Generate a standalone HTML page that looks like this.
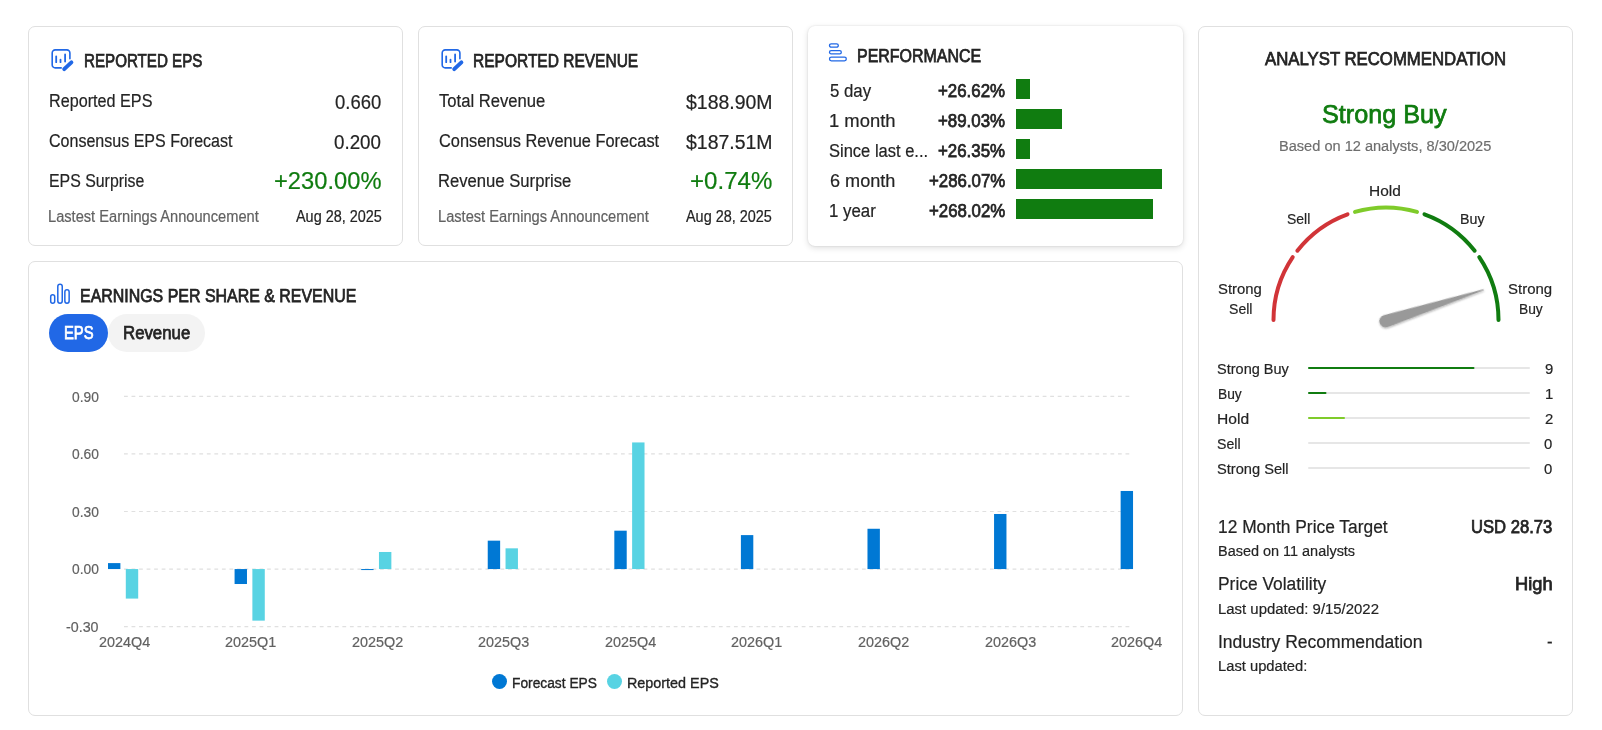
<!DOCTYPE html>
<html><head><meta charset="utf-8"><style>
html,body{margin:0;padding:0;background:#ffffff;width:1602px;height:730px;overflow:hidden;position:relative}
body{font-family:"Liberation Sans",sans-serif;color:#242424}
.c{position:absolute;box-sizing:border-box;border:1px solid #e0e0e0;border-radius:7px;background:#fff}
.t{position:absolute;white-space:pre;transform-origin:0 0}
.a{position:absolute}
</style></head><body>

<div class="c" style="left:28px;top:26px;width:375px;height:220px"></div>
<div class="c" style="left:418px;top:26px;width:375px;height:220px"></div>
<div class="c" style="left:808px;top:26px;width:375px;height:220px;border:none;box-shadow:0 0 2px rgba(0,0,0,.12),0 2px 6px rgba(0,0,0,.13)"></div>
<div class="c" style="left:28px;top:261px;width:1155px;height:455px"></div>
<div class="c" style="left:1198px;top:26px;width:375px;height:690px"></div>
<svg class="a" style="left:50.9px;top:48.9px" width="26" height="26" viewBox="0 0 26 26">
<path d="M10.2 18.9 H4.2 a3 3 0 0 1 -3 -3 V3.9 a3 3 0 0 1 3 -3 H15.9 a3 3 0 0 1 3 3 V9.8" fill="none" stroke="#2168e6" stroke-width="1.6" stroke-linecap="round"/>
<path d="M5.2 7.3 V13.2 M9.5 10.6 V13.2 M14.1 5.5 V12.5" fill="none" stroke="#2168e6" stroke-width="1.8" stroke-linecap="round"/>
<path d="M13.2 20.2 L20.4 13.3" fill="none" stroke="#2168e6" stroke-width="3.9" stroke-linecap="round"/>
</svg>
<svg class="a" style="left:440.9px;top:48.9px" width="26" height="26" viewBox="0 0 26 26">
<path d="M10.2 18.9 H4.2 a3 3 0 0 1 -3 -3 V3.9 a3 3 0 0 1 3 -3 H15.9 a3 3 0 0 1 3 3 V9.8" fill="none" stroke="#2168e6" stroke-width="1.6" stroke-linecap="round"/>
<path d="M5.2 7.3 V13.2 M9.5 10.6 V13.2 M14.1 5.5 V12.5" fill="none" stroke="#2168e6" stroke-width="1.8" stroke-linecap="round"/>
<path d="M13.2 20.2 L20.4 13.3" fill="none" stroke="#2168e6" stroke-width="3.9" stroke-linecap="round"/>
</svg>
<svg class="a" style="left:826px;top:40px" width="24" height="24" viewBox="0 0 24 24">
<g fill="none" stroke="#2168e6" stroke-width="1.3">
<rect x="3.5" y="3.8" width="8.8" height="3.4" rx="1.7"/>
<rect x="3.5" y="10.7" width="11.8" height="3.1" rx="1.55"/>
<rect x="3.5" y="17.2" width="16.8" height="3.6" rx="1.8"/>
</g></svg>
<svg class="a" style="left:48px;top:282px" width="24" height="24" viewBox="0 0 24 24">
<g fill="none" stroke="#2168e6" stroke-width="1.5">
<rect x="2.7" y="12.75" width="4.0" height="8.5" rx="2"/>
<rect x="9.8" y="2.35" width="4.45" height="18.9" rx="2.2"/>
<rect x="16.85" y="7.75" width="4.3" height="13.5" rx="2.15"/>
</g></svg>
<div class="a" style="left:1016px;top:79px;width:14px;height:20px;background:#107c10"></div>
<div class="a" style="left:1016px;top:109px;width:46px;height:20px;background:#107c10"></div>
<div class="a" style="left:1016px;top:139px;width:14px;height:20px;background:#107c10"></div>
<div class="a" style="left:1016px;top:169px;width:146px;height:20px;background:#107c10"></div>
<div class="a" style="left:1016px;top:199px;width:137px;height:20px;background:#107c10"></div>
<div class="a" style="left:49px;top:314px;width:59px;height:38px;border-radius:19px;background:#2168e6"></div>
<div class="a" style="left:108px;top:314px;width:97px;height:38px;border-radius:19px;background:#f3f3f3"></div>
<svg class="a" style="left:0;top:0" width="1602" height="730" viewBox="0 0 1602 730">
<path d="M1273.50 320.00 A112.5 112.5 0 0 1 1292.73 257.09" fill="none" stroke="#d13438" stroke-width="4" stroke-linecap="round"/>
<path d="M1297.35 250.74 A112.5 112.5 0 0 1 1347.52 214.28" fill="none" stroke="#d13438" stroke-width="4" stroke-linecap="round"/>
<path d="M1354.99 211.86 A112.5 112.5 0 0 1 1417.01 211.86" fill="none" stroke="#7fcb2a" stroke-width="4" stroke-linecap="round"/>
<path d="M1424.48 214.28 A112.5 112.5 0 0 1 1474.65 250.74" fill="none" stroke="#107c10" stroke-width="4" stroke-linecap="round"/>
<path d="M1479.27 257.09 A112.5 112.5 0 0 1 1498.50 320.00" fill="none" stroke="#107c10" stroke-width="4" stroke-linecap="round"/>
<defs><filter id="sh" x="-20%" y="-50%" width="140%" height="200%"><feGaussianBlur in="SourceAlpha" stdDeviation="1.2"/><feOffset dx="0" dy="1" result="b"/><feComponentTransfer><feFuncA type="linear" slope="0.35"/></feComponentTransfer><feMerge><feMergeNode/><feMergeNode in="SourceGraphic"/></feMerge></filter></defs>
<g transform="translate(1385.6 321.2) rotate(-17.802)" filter="url(#sh)"><path d="M0 -6.2 L103.03 -0.4 L103.03 0.4 L0 6.2 A6.2 6.2 0 0 1 0 -6.2 Z" fill="#999999"/></g>
<rect x="1308" y="367" width="222" height="2" rx="1" fill="#e6e6e6"/>
<rect x="1308" y="367" width="166.50" height="2" rx="1" fill="#107c10"/>
<rect x="1308" y="392" width="222" height="2" rx="1" fill="#e6e6e6"/>
<rect x="1308" y="392" width="18.50" height="2" rx="1" fill="#107c10"/>
<rect x="1308" y="417" width="222" height="2" rx="1" fill="#e6e6e6"/>
<rect x="1308" y="417" width="37.00" height="2" rx="1" fill="#7fcb2a"/>
<rect x="1308" y="442" width="222" height="2" rx="1" fill="#e6e6e6"/>
<rect x="1308" y="467" width="222" height="2" rx="1" fill="#e6e6e6"/>
<line x1="124" y1="396.40" x2="1133" y2="396.40" stroke="#e0e0e0" stroke-width="1.2" stroke-dasharray="3.8 3.73"/>
<line x1="124" y1="453.95" x2="1133" y2="453.95" stroke="#e0e0e0" stroke-width="1.2" stroke-dasharray="3.8 3.73"/>
<line x1="124" y1="511.50" x2="1133" y2="511.50" stroke="#e0e0e0" stroke-width="1.2" stroke-dasharray="3.8 3.73"/>
<line x1="124" y1="569.05" x2="1133" y2="569.05" stroke="#e0e0e0" stroke-width="1.2" stroke-dasharray="3.8 3.73"/>
<line x1="124" y1="626.60" x2="1133" y2="626.60" stroke="#e0e0e0" stroke-width="1.2" stroke-dasharray="3.8 3.73"/>
<rect x="108.00" y="563.10" width="12.4" height="5.95" fill="#0078d4"/>
<rect x="125.80" y="569.05" width="12.4" height="29.54" fill="#58d3e3"/>
<rect x="234.58" y="569.05" width="12.4" height="14.96" fill="#0078d4"/>
<rect x="252.38" y="569.05" width="12.4" height="51.60" fill="#58d3e3"/>
<rect x="361.16" y="569.05" width="12.4" height="1.00" fill="#0078d4"/>
<rect x="378.96" y="551.98" width="12.4" height="17.07" fill="#58d3e3"/>
<rect x="487.74" y="540.66" width="12.4" height="28.39" fill="#0078d4"/>
<rect x="505.54" y="548.33" width="12.4" height="20.72" fill="#58d3e3"/>
<rect x="614.32" y="530.68" width="12.4" height="38.37" fill="#0078d4"/>
<rect x="632.12" y="442.44" width="12.4" height="126.61" fill="#58d3e3"/>
<rect x="740.90" y="535.10" width="12.4" height="33.95" fill="#0078d4"/>
<rect x="867.48" y="528.76" width="12.4" height="40.29" fill="#0078d4"/>
<rect x="994.06" y="513.99" width="12.4" height="55.06" fill="#0078d4"/>
<rect x="1120.64" y="490.97" width="12.4" height="78.08" fill="#0078d4"/>
<circle cx="499.5" cy="681.5" r="7.5" fill="#0078d4"/>
<circle cx="614.5" cy="681.5" r="7.5" fill="#58d3e3"/>
</svg>
<div class="t" style="left:83.86px;top:51.7px;font-size:18px;line-height:18px;color:#242424;-webkit-text-stroke:0.75px #242424;transform:scaleX(0.8414);">REPORTED EPS</div>
<div class="t" style="left:49.1px;top:91.7px;font-size:18px;line-height:18px;color:#242424;-webkit-text-stroke:0.20px #242424;transform:scaleX(0.8991);">Reported EPS</div>
<div class="t" style="left:335.1px;top:92.0px;font-size:20px;line-height:20px;color:#242424;-webkit-text-stroke:0.20px #242424;transform:scaleX(0.9240);">0.660</div>
<div class="t" style="left:49.4px;top:131.7px;font-size:18px;line-height:18px;color:#242424;-webkit-text-stroke:0.20px #242424;transform:scaleX(0.8903);">Consensus EPS Forecast</div>
<div class="t" style="left:334.4px;top:132.0px;font-size:20px;line-height:20px;color:#242424;-webkit-text-stroke:0.20px #242424;transform:scaleX(0.9380);">0.200</div>
<div class="t" style="left:48.52px;top:171.7px;font-size:18px;line-height:18px;color:#242424;-webkit-text-stroke:0.20px #242424;transform:scaleX(0.8822);">EPS Surprise</div>
<div class="t" style="left:273.83px;top:169.48px;font-size:24.5px;line-height:24.5px;color:#107c10;-webkit-text-stroke:0.20px #107c10;transform:scaleX(0.9682);">+230.00%</div>
<div class="t" style="left:48.49px;top:209.4px;font-size:16px;line-height:16px;color:#616161;-webkit-text-stroke:0.20px #616161;transform:scaleX(0.9148);">Lastest Earnings Announcement</div>
<div class="t" style="left:295.7px;top:209.4px;font-size:16px;line-height:16px;color:#242424;-webkit-text-stroke:0.20px #242424;transform:scaleX(0.9011);">Aug 28, 2025</div>
<div class="t" style="left:473.24px;top:51.7px;font-size:18px;line-height:18px;color:#242424;-webkit-text-stroke:0.75px #242424;transform:scaleX(0.8618);">REPORTED REVENUE</div>
<div class="t" style="left:439.4px;top:91.7px;font-size:18px;line-height:18px;color:#242424;-webkit-text-stroke:0.20px #242424;transform:scaleX(0.9243);">Total Revenue</div>
<div class="t" style="left:685.7px;top:92.0px;font-size:20px;line-height:20px;color:#242424;-webkit-text-stroke:0.20px #242424;transform:scaleX(0.9727);">$188.90M</div>
<div class="t" style="left:439.4px;top:131.7px;font-size:18px;line-height:18px;color:#242424;-webkit-text-stroke:0.20px #242424;transform:scaleX(0.9091);">Consensus Revenue Forecast</div>
<div class="t" style="left:685.7px;top:132.0px;font-size:20px;line-height:20px;color:#242424;-webkit-text-stroke:0.20px #242424;transform:scaleX(0.9727);">$187.51M</div>
<div class="t" style="left:438.48px;top:171.7px;font-size:18px;line-height:18px;color:#242424;-webkit-text-stroke:0.20px #242424;transform:scaleX(0.9245);">Revenue Surprise</div>
<div class="t" style="left:689.72px;top:169.48px;font-size:24.5px;line-height:24.5px;color:#107c10;-webkit-text-stroke:0.20px #107c10;transform:scaleX(0.9829);">+0.74%</div>
<div class="t" style="left:438.49px;top:209.4px;font-size:16px;line-height:16px;color:#616161;-webkit-text-stroke:0.20px #616161;transform:scaleX(0.9148);">Lastest Earnings Announcement</div>
<div class="t" style="left:685.7px;top:209.4px;font-size:16px;line-height:16px;color:#242424;-webkit-text-stroke:0.20px #242424;transform:scaleX(0.9011);">Aug 28, 2025</div>
<div class="t" style="left:856.81px;top:46.7px;font-size:18px;line-height:18px;color:#242424;-webkit-text-stroke:0.75px #242424;transform:scaleX(0.8871);">PERFORMANCE</div>
<div class="t" style="left:829.6px;top:81.7px;font-size:18px;line-height:18px;color:#242424;-webkit-text-stroke:0.20px #242424;transform:scaleX(0.9341);">5 day</div>
<div class="t" style="left:938.1px;top:81.7px;font-size:18px;line-height:18px;color:#242424;-webkit-text-stroke:0.75px #242424;transform:scaleX(0.9375);">+26.62%</div>
<div class="t" style="left:828.58px;top:111.7px;font-size:18px;line-height:18px;color:#242424;-webkit-text-stroke:0.20px #242424;transform:scaleX(1.0222);">1 month</div>
<div class="t" style="left:938.1px;top:111.7px;font-size:18px;line-height:18px;color:#242424;-webkit-text-stroke:0.75px #242424;transform:scaleX(0.9375);">+89.03%</div>
<div class="t" style="left:828.68px;top:141.7px;font-size:18px;line-height:18px;color:#242424;-webkit-text-stroke:0.20px #242424;transform:scaleX(0.9170);">Since last e...</div>
<div class="t" style="left:938.1px;top:141.7px;font-size:18px;line-height:18px;color:#242424;-webkit-text-stroke:0.75px #242424;transform:scaleX(0.9375);">+26.35%</div>
<div class="t" style="left:829.6px;top:171.7px;font-size:18px;line-height:18px;color:#242424;-webkit-text-stroke:0.20px #242424;transform:scaleX(1.0062);">6 month</div>
<div class="t" style="left:928.9px;top:171.7px;font-size:18px;line-height:18px;color:#242424;-webkit-text-stroke:0.75px #242424;transform:scaleX(0.9354);">+286.07%</div>
<div class="t" style="left:828.66px;top:201.7px;font-size:18px;line-height:18px;color:#242424;-webkit-text-stroke:0.20px #242424;transform:scaleX(0.9367);">1 year</div>
<div class="t" style="left:928.9px;top:201.7px;font-size:18px;line-height:18px;color:#242424;-webkit-text-stroke:0.75px #242424;transform:scaleX(0.9354);">+268.02%</div>
<div class="t" style="left:1265.4px;top:49.7px;font-size:18px;line-height:18px;color:#242424;-webkit-text-stroke:0.75px #242424;transform:scaleX(0.9310);">ANALYST RECOMMENDATION</div>
<div class="t" style="left:1322.43px;top:100.9px;font-size:26px;line-height:26px;color:#107c10;-webkit-text-stroke:0.75px #107c10;transform:scaleX(0.9695);">Strong Buy</div>
<div class="t" style="left:1278.76px;top:137.82px;font-size:15.5px;line-height:15.5px;color:#6e6e6e;-webkit-text-stroke:0.20px #6e6e6e;transform:scaleX(0.9404);">Based on 12 analysts, 8/30/2025</div>
<div class="t" style="left:1369.3px;top:182.82px;font-size:15.5px;line-height:15.5px;color:#242424;-webkit-text-stroke:0.20px #242424;transform:scaleX(0.9967);">Hold</div>
<div class="t" style="left:1287.1px;top:210.82px;font-size:15.5px;line-height:15.5px;color:#242424;-webkit-text-stroke:0.20px #242424;transform:scaleX(0.9000);">Sell</div>
<div class="t" style="left:1459.98px;top:210.82px;font-size:15.5px;line-height:15.5px;color:#242424;-webkit-text-stroke:0.20px #242424;transform:scaleX(0.9192);">Buy</div>
<div class="t" style="left:1217.94px;top:280.82px;font-size:15.5px;line-height:15.5px;color:#242424;-webkit-text-stroke:0.20px #242424;transform:scaleX(0.9614);">Strong</div>
<div class="t" style="left:1228.69px;top:300.82px;font-size:15.5px;line-height:15.5px;color:#242424;-webkit-text-stroke:0.20px #242424;transform:scaleX(0.9083);">Sell</div>
<div class="t" style="left:1508.03px;top:280.82px;font-size:15.5px;line-height:15.5px;color:#242424;-webkit-text-stroke:0.20px #242424;transform:scaleX(0.9659);">Strong</div>
<div class="t" style="left:1518.51px;top:300.82px;font-size:15.5px;line-height:15.5px;color:#242424;-webkit-text-stroke:0.20px #242424;transform:scaleX(0.8885);">Buy</div>
<div class="t" style="left:1217.46px;top:360.82px;font-size:15.5px;line-height:15.5px;color:#242424;-webkit-text-stroke:0.20px #242424;transform:scaleX(0.9368);">Strong Buy</div>
<div class="t" style="left:1545.02px;top:360.82px;font-size:15.5px;line-height:15.5px;color:#242424;-webkit-text-stroke:0.20px #242424;transform:scaleX(0.9600);">9</div>
<div class="t" style="left:1217.51px;top:385.82px;font-size:15.5px;line-height:15.5px;color:#242424;-webkit-text-stroke:0.20px #242424;transform:scaleX(0.8885);">Buy</div>
<div class="t" style="left:1545.02px;top:385.82px;font-size:15.5px;line-height:15.5px;color:#242424;-webkit-text-stroke:0.20px #242424;transform:scaleX(0.9600);">1</div>
<div class="t" style="left:1217.39px;top:410.82px;font-size:15.5px;line-height:15.5px;color:#242424;-webkit-text-stroke:0.20px #242424;transform:scaleX(1.0067);">Hold</div>
<div class="t" style="left:1545.02px;top:410.82px;font-size:15.5px;line-height:15.5px;color:#242424;-webkit-text-stroke:0.20px #242424;transform:scaleX(0.9600);">2</div>
<div class="t" style="left:1217.49px;top:435.82px;font-size:15.5px;line-height:15.5px;color:#242424;-webkit-text-stroke:0.20px #242424;transform:scaleX(0.9125);">Sell</div>
<div class="t" style="left:1544.06px;top:435.82px;font-size:15.5px;line-height:15.5px;color:#242424;-webkit-text-stroke:0.20px #242424;transform:scaleX(0.9600);">0</div>
<div class="t" style="left:1217.46px;top:460.82px;font-size:15.5px;line-height:15.5px;color:#242424;-webkit-text-stroke:0.20px #242424;transform:scaleX(0.9446);">Strong Sell</div>
<div class="t" style="left:1544.06px;top:460.82px;font-size:15.5px;line-height:15.5px;color:#242424;-webkit-text-stroke:0.20px #242424;transform:scaleX(0.9600);">0</div>
<div class="t" style="left:1217.63px;top:517.7px;font-size:18px;line-height:18px;color:#242424;-webkit-text-stroke:0.20px #242424;transform:scaleX(0.9651);">12 Month Price Target</div>
<div class="t" style="left:1471.08px;top:517.7px;font-size:18px;line-height:18px;color:#242424;-webkit-text-stroke:0.75px #242424;transform:scaleX(0.9241);">USD 28.73</div>
<div class="t" style="left:1217.67px;top:542.83px;font-size:15.5px;line-height:15.5px;color:#242424;-webkit-text-stroke:0.20px #242424;transform:scaleX(0.9322);">Based on 11 analysts</div>
<div class="t" style="left:1217.63px;top:574.7px;font-size:18px;line-height:18px;color:#242424;-webkit-text-stroke:0.20px #242424;transform:scaleX(0.9658);">Price Volatility</div>
<div class="t" style="left:1514.89px;top:574.7px;font-size:18px;line-height:18px;color:#242424;-webkit-text-stroke:0.75px #242424;transform:scaleX(1.0139);">High</div>
<div class="t" style="left:1217.64px;top:600.83px;font-size:15.5px;line-height:15.5px;color:#242424;-webkit-text-stroke:0.20px #242424;transform:scaleX(0.9627);">Last updated: 9/15/2022</div>
<div class="t" style="left:1217.63px;top:632.7px;font-size:18px;line-height:18px;color:#242424;-webkit-text-stroke:0.20px #242424;transform:scaleX(0.9736);">Industry Recommendation</div>
<div class="t" style="left:1546.82px;top:632.7px;font-size:18px;line-height:18px;color:#242424;-webkit-text-stroke:0.20px #242424;transform:scaleX(0.9300);">-</div>
<div class="t" style="left:1217.65px;top:657.83px;font-size:15.5px;line-height:15.5px;color:#242424;-webkit-text-stroke:0.20px #242424;transform:scaleX(0.9511);">Last updated:</div>
<div class="t" style="left:80.31px;top:286.7px;font-size:18px;line-height:18px;color:#242424;-webkit-text-stroke:0.75px #242424;transform:scaleX(0.8855);">EARNINGS PER SHARE &amp; REVENUE</div>
<div class="t" style="left:63.58px;top:323.7px;font-size:18px;line-height:18px;color:#ffffff;-webkit-text-stroke:0.75px #ffffff;transform:scaleX(0.8200);">EPS</div>
<div class="t" style="left:122.82px;top:323.7px;font-size:18px;line-height:18px;color:#242424;-webkit-text-stroke:0.75px #242424;transform:scaleX(0.9331);">Revenue</div>
<div class="t" style="left:71.9px;top:388.52px;font-size:15.5px;line-height:15.5px;color:#616161;-webkit-text-stroke:0.20px #616161;transform:scaleX(0.8900);">0.90</div>
<div class="t" style="left:71.9px;top:446.07px;font-size:15.5px;line-height:15.5px;color:#616161;-webkit-text-stroke:0.20px #616161;transform:scaleX(0.8900);">0.60</div>
<div class="t" style="left:71.9px;top:503.62px;font-size:15.5px;line-height:15.5px;color:#616161;-webkit-text-stroke:0.20px #616161;transform:scaleX(0.8900);">0.30</div>
<div class="t" style="left:71.9px;top:561.17px;font-size:15.5px;line-height:15.5px;color:#616161;-webkit-text-stroke:0.20px #616161;transform:scaleX(0.8900);">0.00</div>
<div class="t" style="left:66.4px;top:618.72px;font-size:15.5px;line-height:15.5px;color:#616161;-webkit-text-stroke:0.20px #616161;transform:scaleX(0.9200);">-0.30</div>
<div class="t" style="left:98.5px;top:633.83px;font-size:15.5px;line-height:15.5px;color:#616161;-webkit-text-stroke:0.20px #616161;transform:scaleX(0.9273);">2024Q4</div>
<div class="t" style="left:225.08px;top:633.83px;font-size:15.5px;line-height:15.5px;color:#616161;-webkit-text-stroke:0.20px #616161;transform:scaleX(0.9273);">2025Q1</div>
<div class="t" style="left:351.66px;top:633.83px;font-size:15.5px;line-height:15.5px;color:#616161;-webkit-text-stroke:0.20px #616161;transform:scaleX(0.9273);">2025Q2</div>
<div class="t" style="left:478.24px;top:633.83px;font-size:15.5px;line-height:15.5px;color:#616161;-webkit-text-stroke:0.20px #616161;transform:scaleX(0.9273);">2025Q3</div>
<div class="t" style="left:604.82px;top:633.83px;font-size:15.5px;line-height:15.5px;color:#616161;-webkit-text-stroke:0.20px #616161;transform:scaleX(0.9273);">2025Q4</div>
<div class="t" style="left:731.4px;top:633.83px;font-size:15.5px;line-height:15.5px;color:#616161;-webkit-text-stroke:0.20px #616161;transform:scaleX(0.9273);">2026Q1</div>
<div class="t" style="left:857.98px;top:633.83px;font-size:15.5px;line-height:15.5px;color:#616161;-webkit-text-stroke:0.20px #616161;transform:scaleX(0.9273);">2026Q2</div>
<div class="t" style="left:984.56px;top:633.83px;font-size:15.5px;line-height:15.5px;color:#616161;-webkit-text-stroke:0.20px #616161;transform:scaleX(0.9273);">2026Q3</div>
<div class="t" style="left:1111.14px;top:633.83px;font-size:15.5px;line-height:15.5px;color:#616161;-webkit-text-stroke:0.20px #616161;transform:scaleX(0.9273);">2026Q4</div>
<div class="t" style="left:511.91px;top:674.83px;font-size:15.5px;line-height:15.5px;color:#242424;-webkit-text-stroke:0.35px #242424;transform:scaleX(0.8883);">Forecast EPS</div>
<div class="t" style="left:627.07px;top:674.83px;font-size:15.5px;line-height:15.5px;color:#242424;-webkit-text-stroke:0.35px #242424;transform:scaleX(0.9265);">Reported EPS</div>
</body></html>
